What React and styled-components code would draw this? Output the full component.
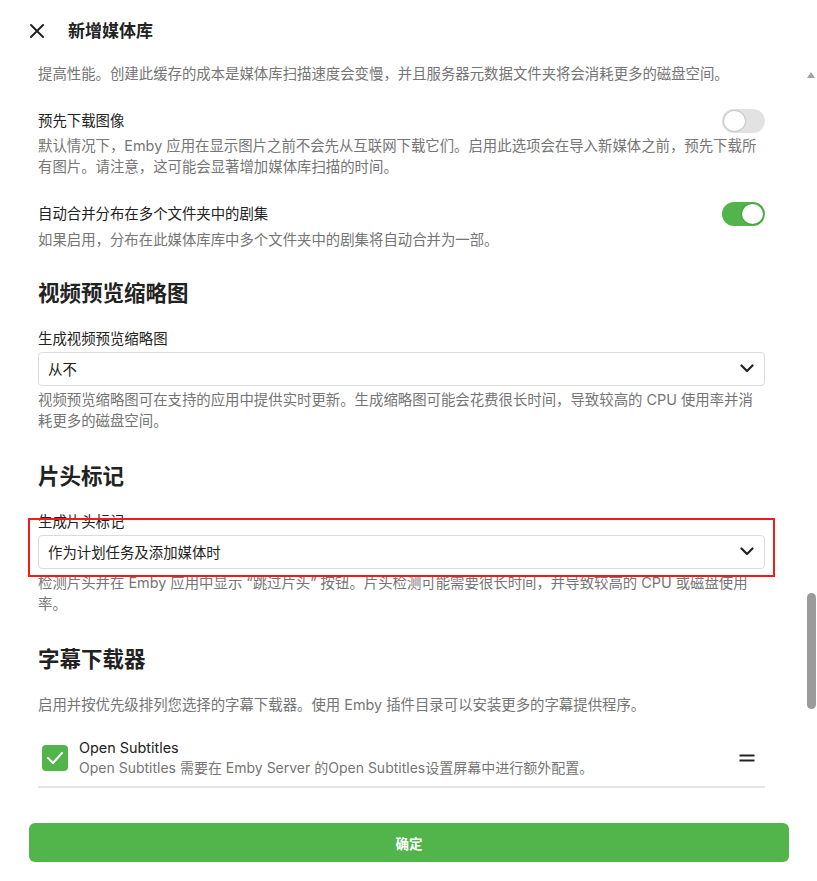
import styled, { createGlobalStyle } from 'styled-components';

const GlobalStyle = createGlobalStyle`
  html, body {
    margin: 0;
    padding: 0;
    background: #fff;
  }
  body {
    font-family: 'Inter', 'Noto Sans CJK SC', sans-serif;
    color: #222;
  }
  * { box-sizing: border-box; }
`;

const Page = styled.div`
  width: 817px;
  height: 881px;
  display: flex;
  flex-direction: column;
  overflow: hidden;
  background: #fff;
`;

const Header = styled.header`
  height: 61px;
  flex-shrink: 0;
  display: flex;
  align-items: center;
  gap: 14px;
  padding-left: 28px;
`;

const CloseButton = styled.button`
  width: 18px;
  height: 18px;
  padding: 0;
  border: 0;
  background: none;
  display: flex;
  align-items: center;
  justify-content: center;
  color: #222;
`;

const Title = styled.h1`
  margin: 0 0 0 8px;
  font-size: 17px;
  font-weight: 700;
  color: #222;
  line-height: 24px;
`;

const ScrollArea = styled.div`
  flex: 1;
  display: flex;
  min-height: 0;
`;

const Content = styled.div`
  width: 727px;
  margin-left: 38px;
  padding-top: 2px;
`;

const ScrollBar = styled.div`
  width: 10px;
  margin-left: auto;
  margin-right: 1px;
  display: flex;
  flex-direction: column;
  align-items: center;
  padding-top: 11px;
`;

const Arrow = styled.div`
  width: 0;
  height: 0;
  border-left: 4px solid transparent;
  border-right: 4px solid transparent;
  border-bottom: 6px solid #a3a3a3;
`;

const Thumb = styled.div`
  width: 9px;
  height: 116px;
  margin-top: 515px;
  border-radius: 5px;
  background: #9b9b9b;
`;

const Desc = styled.p`
  margin: ${p => p.$top || 0}px 0 0;
  font-size: 14.4px;
  line-height: 21px;
  color: #757575;
`;

const ToggleRow = styled.div`
  display: flex;
  align-items: center;
  justify-content: space-between;
  height: 24px;
  margin-top: ${p => p.$top || 0}px;
`;

const Label = styled.div`
  font-size: 14.4px;
  line-height: 21px;
  color: #222;
  margin-top: ${p => p.$top || 0}px;
`;

const Toggle = styled.div`
  width: 43px;
  height: 24px;
  border-radius: 12px;
  padding: 2px;
  display: flex;
  justify-content: ${p => (p.$on ? 'flex-end' : 'flex-start')};
  background: ${p => (p.$on ? '#52b54b' : '#e2e2e2')};
`;

const Knob = styled.div`
  width: 21px;
  height: 20px;
  border-radius: 50%;
  background: #fff;
  box-shadow: 0 0 1px 1px rgba(0, 0, 0, 0.12);
`;

const Heading = styled.h2`
  margin: ${p => p.$top || 0}px 0 0;
  font-size: 21.5px;
  font-weight: 700;
  line-height: 30px;
  color: #222;
`;

const Field = styled.div`
  position: relative;
  margin-top: ${p => p.$top || 0}px;
`;

const Select = styled.div`
  height: 34px;
  margin-top: 2.5px;
  border: 1px solid #dcdcdc;
  border-radius: 4px;
  display: flex;
  align-items: center;
  justify-content: space-between;
  padding: 0 10px 0 9px;
  font-size: 14.4px;
  color: #222;
`;

const Highlight = styled.div`
  position: absolute;
  top: 6.5px;
  left: -10px;
  right: -10px;
  bottom: -8px;
  border: 2px solid #f01b1b;
  pointer-events: none;
`;

const ProviderRow = styled.div`
  display: flex;
  align-items: center;
  gap: 11px;
  margin-top: 19px;
  padding: 4px 0 8px 4px;
  border-bottom: 2px solid #e3e3e3;
`;

const CheckBox = styled.div`
  width: 26px;
  height: 26px;
  border-radius: 4px;
  background: #52b54b;
  display: flex;
  align-items: center;
  justify-content: center;
  flex-shrink: 0;
`;

const ProviderText = styled.div`
  flex: 1;
`;

const ProviderName = styled.div`
  font-size: 14.4px;
  line-height: 20px;
  color: #222;
`;

const ProviderNote = styled.div`
  font-size: 14px;
  line-height: 20px;
  color: #757575;
`;

const Handle = styled.div`
  width: 20px;
  margin-right: 8px;
  display: flex;
  justify-content: center;
`;

const Footer = styled.footer`
  flex-shrink: 0;
  height: 81px;
  padding: 23px 28px 0 29px;
`;

const SubmitButton = styled.button`
  width: 100%;
  height: 39px;
  border: 0;
  border-radius: 6px;
  background: #52b54b;
  color: #fff;
  font-family: 'Inter', 'Noto Sans CJK SC', sans-serif;
  font-size: 13.5px;
  font-weight: 700;
`;

function Chevron() {
  return (
    <svg width="14" height="9" viewBox="0 0 14 9">
      <path d="M1.5 1.5 L7 7 L12.5 1.5" fill="none" stroke="#222" strokeWidth="2.2" strokeLinecap="round" strokeLinejoin="round" />
    </svg>
  );
}

export default function App() {
  return (
    <Page>
      <GlobalStyle />
      <Header>
        <CloseButton aria-label="close">
          <svg width="16" height="16" viewBox="0 0 16 16">
            <path d="M2 2 L14 14 M14 2 L2 14" stroke="#222" strokeWidth="2" strokeLinecap="round" />
          </svg>
        </CloseButton>
        <Title>新增媒体库</Title>
      </Header>

      <ScrollArea>
        <Content>
          <Desc>提高性能。创建此缓存的成本是媒体库扫描速度会变慢，并且服务器元数据文件夹将会消耗更多的磁盘空间。</Desc>

          <ToggleRow $top={24.5}>
            <Label>预先下载图像</Label>
            <Toggle><Knob /></Toggle>
          </ToggleRow>
          <Desc $top={2.5}>
            默认情况下，Emby 应用在显示图片之前不会先从互联网下载它们。启用此选项会在导入新媒体之前，预先下载所有图片。请注意，这可能会显著增加媒体库扫描的时间。
          </Desc>

          <ToggleRow $top={24.5}>
            <Label>自动合并分布在多个文件夹中的剧集</Label>
            <Toggle $on><Knob /></Toggle>
          </ToggleRow>
          <Desc $top={3.5}>如果启用，分布在此媒体库库中多个文件夹中的剧集将自动合并为一部。</Desc>

          <Heading $top={27.5}>视频预览缩略图</Heading>
          <Field $top={20.5}>
            <Label>生成视频预览缩略图</Label>
            <Select>
              <span>从不</span>
              <Chevron />
            </Select>
          </Field>
          <Desc $top={3.5}>
            视频预览缩略图可在支持的应用中提供实时更新。生成缩略图可能会花费很长时间，导致较高的 CPU 使用率并消耗更多的磁盘空间。
          </Desc>

          <Heading $top={29.5}>片头标记</Heading>
          <Field $top={20.5}>
            <Label>生成片头标记</Label>
            <Select>
              <span>作为计划任务及添加媒体时</span>
              <Chevron />
            </Select>
            <Highlight />
          </Field>
          <Desc $top={3.5}>
            检测片头并在 Emby 应用中显示 “跳过片头” 按钮。片头检测可能需要很长时间，并导致较高的 CPU 或磁盘使用率。
          </Desc>

          <Heading $top={29.5}>字幕下载器</Heading>
          <Desc $top={20.5}>启用并按优先级排列您选择的字幕下载器。使用 Emby 插件目录可以安装更多的字幕提供程序。</Desc>

          <ProviderRow>
            <CheckBox>
              <svg width="18" height="14" viewBox="0 0 18 14">
                <path d="M2 7 L7 12 L16 2" fill="none" stroke="#fff" strokeWidth="2" strokeLinecap="round" strokeLinejoin="round" />
              </svg>
            </CheckBox>
            <ProviderText>
              <ProviderName>Open Subtitles</ProviderName>
              <ProviderNote>Open Subtitles 需要在 Emby Server 的Open Subtitles设置屏幕中进行额外配置。</ProviderNote>
            </ProviderText>
            <Handle>
              <svg width="16" height="8" viewBox="0 0 16 8">
                <path d="M0.5 1.5 H15.5 M0.5 6.5 H15.5" stroke="#222" strokeWidth="2" />
              </svg>
            </Handle>
          </ProviderRow>
        </Content>
        <ScrollBar>
          <Arrow />
          <Thumb />
        </ScrollBar>
      </ScrollArea>

      <Footer>
        <SubmitButton>确定</SubmitButton>
      </Footer>
    </Page>
  );
}
